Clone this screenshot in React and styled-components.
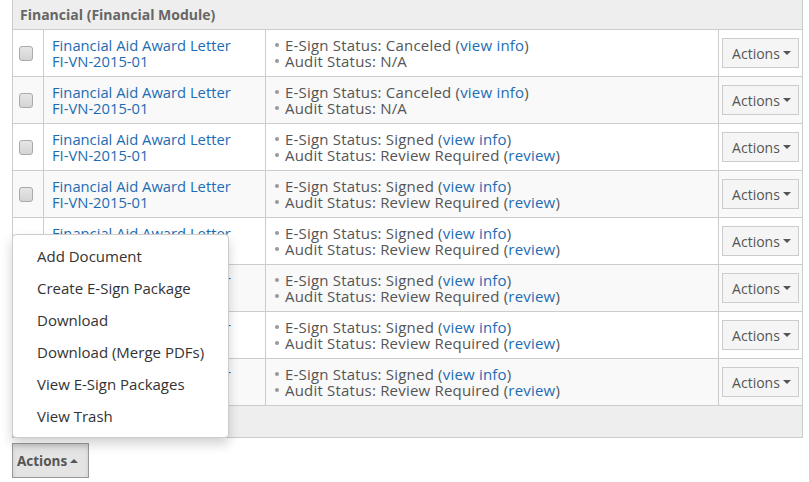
import React from 'react';
import styled, { createGlobalStyle } from 'styled-components';

const GlobalStyle = createGlobalStyle`
  html, body {
    margin: 0;
    padding: 0;
    background: #fff;
    font-family: "Open Sans", "Liberation Sans", sans-serif;
    font-size: 15px;
    color: #555;
  }
`;

const Page = styled.div`
  padding-left: 12px;
  width: 791px;
  margin-top: -1px;
  position: relative;
`;

const Table = styled.table`
  width: 100%;
  border-collapse: collapse;
  table-layout: fixed;
  border: 1px solid #ccc;
`;

const HeaderCell = styled.th`
  background: #eee;
  color: #666;
  font-size: 14px;
  font-weight: 700;
  text-align: left;
  height: 29px;
  padding: 0 7px;
  border: 1px solid #ccc;
`;

const Row = styled.tr`
  background: ${p => (p.$odd ? '#f9f9f9' : '#fff')};
  height: 47px;
`;

const Cell = styled.td`
  border: 1px solid #ccc;
  padding: 0 8px 1px;
  vertical-align: middle;
  line-height: 16px;
  white-space: nowrap;
`;

const NameCell = styled(Cell)`
  font-size: 14.75px;
`;

const StatusCell = styled(Cell)`
  letter-spacing: 0.2px;
  padding-left: 9px;
`;

const CheckCell = styled(Cell)`
  padding: 0 0 0 6px;
`;

const Check = styled.span`
  display: block;
  width: 12px;
  height: 13px;
  border: 1px solid #aaa;
  border-radius: 3px;
  background: linear-gradient(#e6e6e6, #d4d4d4);
  margin-top: 1px;
`;

const Link = styled.a`
  color: #1c6cb4;
  text-decoration: none;
  cursor: pointer;
`;

const StatusLine = styled.div`
  color: #555;
  &::before {
    content: '';
    display: inline-block;
    width: 4px;
    height: 4px;
    border-radius: 50%;
    background: #999;
    margin: 0 6px 3px 0;
    vertical-align: middle;
  }
`;

const ActionCell = styled(Cell)`
  padding: 0 3px;
`;

const Caret = styled.span`
  display: inline-block;
  width: 0;
  height: 0;
  border-left: 4px solid transparent;
  border-right: 4px solid transparent;
  ${p => (p.$up ? 'border-bottom: 4px solid #555;' : 'border-top: 4px solid #555;')}
  margin-left: 3px;
  vertical-align: middle;
`;

const RowButton = styled.button`
  font-family: inherit;
  font-size: 14px;
  color: #555;
  background: #f5f5f5;
  border: 1px solid #ccc;
  height: 30px;
  width: 77px;
  padding: 0 0 0 2px;
  display: flex;
  align-items: center;
  justify-content: center;
`;

const FooterCell = styled.td`
  background: #eee;
  height: 29px;
  border: 1px solid #ccc;
`;

const BottomButton = styled.button`
  margin-top: 5px;
  font-family: inherit;
  font-size: 13.5px;
  font-weight: 700;
  color: #555;
  background: #e4e4e4;
  border: 1px solid #999;
  box-shadow: inset 0 2px 4px rgba(0, 0, 0, 0.12);
  height: 35px;
  width: 77px;
  padding: 0 0 0 4px;
  display: flex;
  align-items: center;
`;

const Menu = styled.ul`
  position: absolute;
  left: 12px;
  top: 235px;
  width: 217px;
  margin: 0;
  padding: 5px 0;
  list-style: none;
  background: #fff;
  border: 1px solid #ccc;
  border-radius: 4px;
  box-shadow: 0 6px 12px rgba(0, 0, 0, 0.18);
  box-sizing: border-box;
`;

const MenuItem = styled.li`
  padding: 0 0 0 24px;
  height: 32px;
  line-height: 32px;
  color: #333;
  font-size: 15px;
  white-space: nowrap;
`;

const rows = [
  { esign: 'Canceled', audit: 'N/A' },
  { esign: 'Canceled', audit: 'N/A' },
  { esign: 'Signed', audit: 'Review Required' },
  { esign: 'Signed', audit: 'Review Required' },
  { esign: 'Signed', audit: 'Review Required' },
  { esign: 'Signed', audit: 'Review Required' },
  { esign: 'Signed', audit: 'Review Required' },
  { esign: 'Signed', audit: 'Review Required' },
];

const menuItems = [
  'Add Document',
  'Create E-Sign Package',
  'Download',
  'Download (Merge PDFs)',
  'View E-Sign Packages',
  'View Trash',
];

export default function App() {
  return (
    <Page>
      <GlobalStyle />
      <Table>
        <colgroup>
          <col style={{ width: 31 }} />
          <col style={{ width: 222 }} />
          <col />
          <col style={{ width: 84 }} />
        </colgroup>
        <thead>
          <tr>
            <HeaderCell colSpan={4}>Financial (Financial Module)</HeaderCell>
          </tr>
        </thead>
        <tbody>
          {rows.map((r, i) => (
            <Row key={i} $odd={i % 2 === 1}>
              <CheckCell>
                <Check />
              </CheckCell>
              <NameCell>
                <Link>Financial Aid Award Letter</Link>
                <br />
                <Link>FI-VN-2015-01</Link>
              </NameCell>
              <StatusCell>
                <StatusLine>
                  E-Sign Status: {r.esign} (<Link>view info</Link>)
                </StatusLine>
                <StatusLine>
                  Audit Status: {r.audit}
                  {r.audit !== 'N/A' && (
                    <>
                      {' '}(<Link>review</Link>)
                    </>
                  )}
                </StatusLine>
              </StatusCell>
              <ActionCell>
                <RowButton>
                  Actions <Caret />
                </RowButton>
              </ActionCell>
            </Row>
          ))}
          <tr>
            <FooterCell colSpan={4} />
          </tr>
        </tbody>
      </Table>
      <BottomButton>
        Actions <Caret $up />
      </BottomButton>
      <Menu>
        {menuItems.map(m => (
          <MenuItem key={m}>{m}</MenuItem>
        ))}
      </Menu>
    </Page>
  );
}
